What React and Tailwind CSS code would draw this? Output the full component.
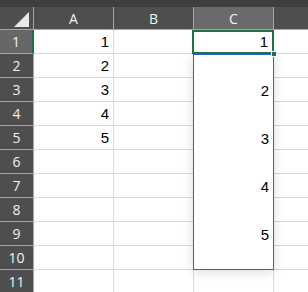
import React from "react";

const rows = [1, 2, 3, 4, 5, 6, 7, 8, 9, 10, 11];
const colA = { 1: "1", 2: "2", 3: "3", 4: "4", 5: "5" };
const overlayVals = ["", "2", "", "3", "", "4", "", "5", ""];

export default function App() {
  return (
    <div className="w-[308px] h-[292px] overflow-hidden bg-white relative">
      <div className="h-[7px] bg-[#3e3e3e]" />
      <div className="flex h-[23px] bg-[#4e4e4e] border-b border-[#a6a6a6] text-[#f2f2f2] text-[14px] font-['Open_Sans',sans-serif] leading-[22px]">
        <div className="w-[34px] shrink-0 border-r border-[#a6a6a6] relative">
          <svg className="absolute left-0 top-0" width="33" height="22" viewBox="0 0 33 22">
            <polygon points="14,20 29,20 29,5" fill="#e9e9e9" />
          </svg>
        </div>
        <div className="w-[80px] shrink-0 border-r border-[#a6a6a6] text-center pt-[1px]">A</div>
        <div className="w-[80px] shrink-0 border-r border-[#a6a6a6] text-center pt-[1px]">B</div>
        <div className="w-[80px] shrink-0 border-r border-[#a6a6a6] text-center pt-[1px] bg-[#6a6a6a]">C</div>
        <div className="flex-1" />
      </div>
      <div className="relative">
        {rows.map((r) => (
          <div key={r} className="flex h-[24px]">
            <div
              className={`w-[34px] shrink-0 border-b border-[#a6a6a6] text-center text-[#f2f2f2] text-[14px] font-['Open_Sans',sans-serif] leading-[23px] ${
                r === 1 ? "bg-[#676767] border-r-2 border-r-[#1e7145]" : "bg-[#4e4e4e] border-r border-r-[#a6a6a6]"
              }`}
            >
              {r}
            </div>
            <div className="w-[80px] shrink-0 border-r border-b border-[#d9d9d9] text-right pr-[4px] text-[15px] font-['Liberation_Sans',sans-serif] leading-[24px] text-black">
              {colA[r] || ""}
            </div>
            <div className="w-[80px] shrink-0 border-r border-b border-[#d9d9d9]" />
            <div className="w-[80px] shrink-0 border-r border-b border-[#d9d9d9]" />
            <div className="flex-1 border-b border-[#d9d9d9]" />
          </div>
        ))}
        {/* Overlay box */}
        <div className="absolute z-10 left-[193px] top-[24px] w-[81px] h-[216px] bg-white border border-[#2c62c9] shadow-[0_2px_10px_rgba(0,0,0,0.15)]">
          {overlayVals.map((v, i) => (
            <div key={i} className="h-[24px] text-right pr-[4px] text-[15px] font-['Liberation_Sans',sans-serif] leading-[24px] text-black">
              {v}
            </div>
          ))}
        </div>
        {/* Selected cell C1 */}
        <div className="absolute z-20 left-[192px] top-0 w-[82px] h-[24px] border-2 border-[#1e7145] bg-white text-right pr-[4px] text-[15px] font-['Liberation_Sans',sans-serif] leading-[20px] text-black">
          1
        </div>
        <div className="absolute z-30 left-[271px] top-[21px] w-[6px] h-[6px] bg-[#1e7145] border border-white" />
      </div>
    </div>
  );
}
